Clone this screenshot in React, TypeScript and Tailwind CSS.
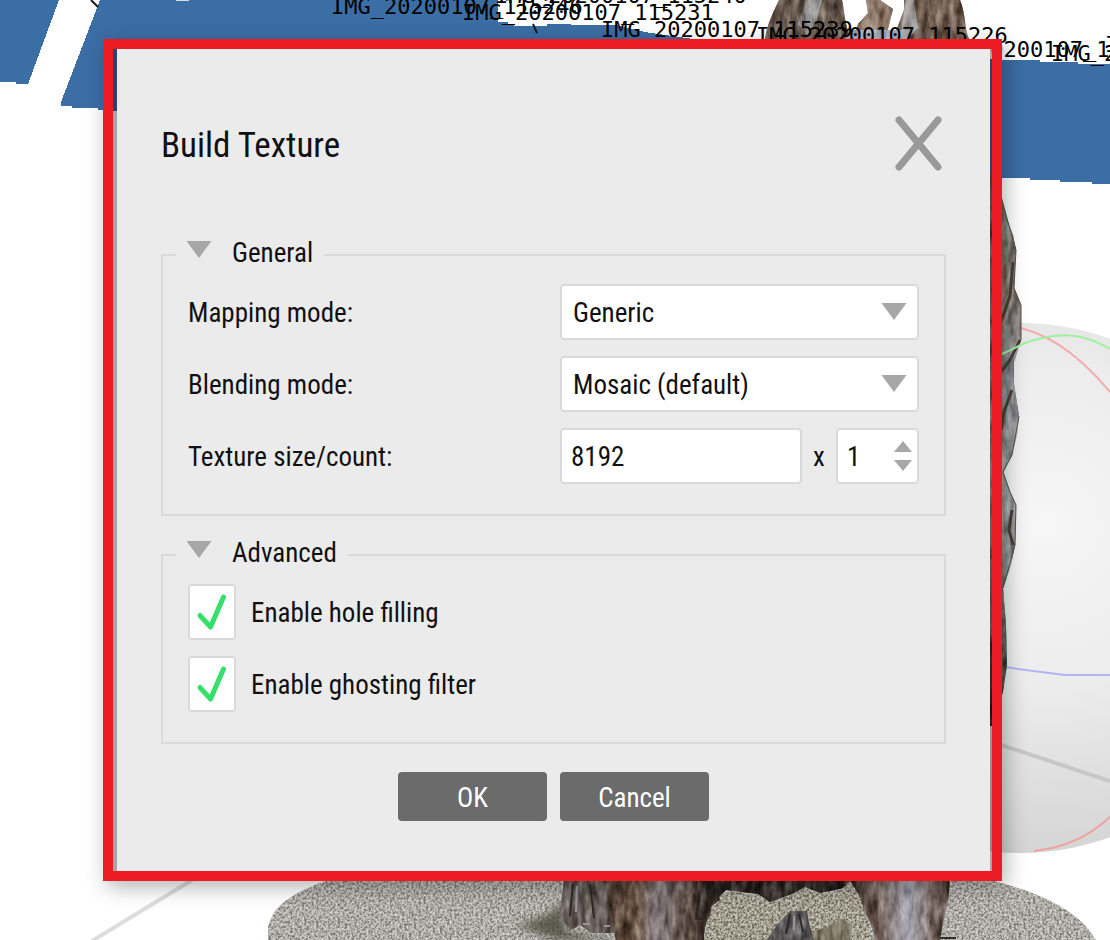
import { useState } from "react";
import type { ReactNode } from "react";

const cameraLabels = [
  { x: 331, y: 14, text: "IMG_20200107_115246" },
  { x: 495, y: 3, text: "IMG_20200107_115240" },
  { x: 462, y: 20, text: "IMG_20200107_115231" },
  { x: 601, y: 37, text: "IMG_20200107_115239" },
  { x: 756, y: 43, text: "IMG_20200107_115226" },
  { x: 924, y: 57, text: "IMG_20200107_11" },
  { x: 1051, y: 61, text: "IMG_20200107" },
  { x: 1105, y: 52, text: "IMG_20200107" },
];

function Scene() {
  return (
    <svg
      className="absolute inset-0 h-full w-full"
      viewBox="0 0 1110 940"
      preserveAspectRatio="xMidYMid slice"
      aria-hidden="true"
    >
      <defs>
        <filter id="stone" x="0" y="0" width="100%" height="100%" colorInterpolationFilters="sRGB">
          <feTurbulence type="fractalNoise" baseFrequency="0.42" numOctaves="3" seed="4" result="n" />
          <feColorMatrix
            in="n"
            type="matrix"
            values="2.2 0 0 0 -0.6  2.2 0 0 0 -0.6  2.2 0 0 0 -0.6  0 0 0 0 1"
            result="g"
          />
          <feComposite in="g" in2="SourceGraphic" operator="in" result="m" />
          <feBlend in="m" in2="SourceGraphic" mode="soft-light" />
        </filter>
        <filter id="bronze" x="0" y="0" width="100%" height="100%" colorInterpolationFilters="sRGB">
          <feTurbulence type="fractalNoise" baseFrequency="0.14 0.05" numOctaves="4" seed="9" result="n" />
          <feColorMatrix
            in="n"
            type="matrix"
            values="1.3 0 0 0 -0.13  1.3 0 0 0 -0.13  1.3 0 0 0 -0.13  0 0 0 0 1"
            result="g"
          />
          <feComposite in="g" in2="SourceGraphic" operator="in" result="m" />
          <feBlend in="m" in2="SourceGraphic" mode="soft-light" />
        </filter>
        <filter id="soft">
          <feGaussianBlur stdDeviation="4" />
        </filter>
        <radialGradient id="ball" cx="0.55" cy="0.38" r="0.62">
          <stop offset="0" stopColor="#f6f6f6" />
          <stop offset="0.5" stopColor="#ececec" />
          <stop offset="1" stopColor="#d5d5d5" />
        </radialGradient>
        <linearGradient id="legA">
          <stop offset="0" stopColor="#4a3a2e" />
          <stop offset="0.3" stopColor="#6b5546" />
          <stop offset="0.45" stopColor="#8a8082" />
          <stop offset="0.75" stopColor="#54443c" />
          <stop offset="1" stopColor="#2b211c" />
        </linearGradient>
        <linearGradient id="legB">
          <stop offset="0" stopColor="#33251e" />
          <stop offset="0.3" stopColor="#6a5850" />
          <stop offset="0.6" stopColor="#a9a8b3" />
          <stop offset="0.85" stopColor="#75655d" />
          <stop offset="1" stopColor="#3d2f28" />
        </linearGradient>
        <linearGradient id="torso" x1="0" y1="0" x2="0" y2="1">
          <stop offset="0" stopColor="#6b6b6c" />
          <stop offset="0.2" stopColor="#7d736a" />
          <stop offset="0.35" stopColor="#88878c" />
          <stop offset="0.62" stopColor="#9c9c9f" />
          <stop offset="0.75" stopColor="#77777a" />
          <stop offset="0.85" stopColor="#4c4a4a" />
          <stop offset="1" stopColor="#332e2c" />
        </linearGradient>
      </defs>

      <rect width="1110" height="940" fill="#ffffff" />

      <g fill="#3b6ea5" shapeRendering="crispEdges">
        <path d="M0 0H59L28 84H16V82H0Z" />
        <path d="M100 0H498V22H508V24H514V26H547V24H571V25H616L645 32L700 40L1002 60H1040V62H1078V64H1110V184H1092V182H1060V180H1030V178H1002L98 110V108H72V106H61V102Z" />
      </g>
      <path d="M176 0H189" stroke="#d5dde6" strokeWidth="2" />
      <path d="M91 0L98 7M533 24L537 33" stroke="#1b1b1b" strokeWidth="2" fill="none" />

      <g filter="url(#bronze)">
        <path d="M765 39C768 20 774 12 779 0H842C845 12 844 26 852 39Z" fill="#615347" />
        <path d="M853 39L858 24L868 13L866 0H880L893 9L888 29L880 39Z" fill="#907a6a" />
        <path d="M893 39L904 10V0H960C966 14 964 28 969 39Z" fill="#6d5b4d" />
        <path d="M806 0H822L816 22L808 36L798 24Z" fill="#8d8b8a" />
        <path d="M906 0H914L918 28L908 39H900Z" fill="#9b9896" />
        <path d="M850 30H910V39H845Z" fill="#a8adb9" />
      </g>

      <circle cx="1020" cy="588" r="265" fill="url(#ball)" />
      <g fill="none" strokeWidth="2">
        <path d="M1000 324C1042 329 1075 350 1110 392" stroke="#f5a9a9" />
        <path d="M1034 851C1064 848 1090 836 1110 817" stroke="#f0a0a0" />
        <path d="M1000 666L1018 669L1065 675H1110" stroke="#b4b4f3" />
        <path d="M992 742L1110 781" stroke="#c7c7c7" strokeWidth="4" />
        <path d="M192 880L92 941" stroke="#dddddd" strokeWidth="4" />
      </g>

      <path
        d="M988 168L995 180L1002 200L1008 222L1013 235L1016 250L1015 262L1014 288L1021 305V340L1014 362V384L1019 416L1017 435L1012 455L1003 472L1010 492L1016 505L1015 545L1011 565L1003 588L1006 625L1007 665L1003 691L994 726H988Z"
        fill="url(#torso)"
        filter="url(#bronze)"
      />
      <path
        d="M1001 196L1008 222L1016 250L1014 288L1021 305V340M1019 416L1012 455L1003 472L1010 492L1016 505L1015 545L1003 588"
        fill="none"
        stroke="#5a504a"
        strokeWidth="1"
      />
      <path
        d="M1013 262L1010 296L1001 322M1020 340L1010 360L1001 372M1012 390L1004 412L1001 430M1012 510L1009 530L1013 545"
        fill="none"
        stroke="#4b3f38"
        strokeWidth="3"
      />
      <path d="M1000 355L1025 343C1062 330 1084 334 1110 349" stroke="#9ff09f" strokeWidth="2" fill="none" />

      <path
        d="M268 941V928C272 904 298 889 340 877H975C1020 886 1078 905 1096 941Z"
        fill="#b0aea8"
        filter="url(#stone)"
      />
      <path d="M515 925C550 918 558 908 562 900L566 932L625 941H562Z" fill="#414230" opacity="0.75" filter="url(#soft)" />
      <g filter="url(#bronze)">
        <path d="M564 877H614V933H592L580 925L571 930L560 918Z" fill="#655b56" />
        <path d="M604 877H718L720 905C705 916 704 930 704 941H616Z" fill="url(#legA)" />
        <path d="M700 877H852L849 887L820 893L805 887L792 894L770 902L758 894L726 890L710 906L704 920H695Z" fill="#2f2722" />
        <path d="M846 877H950L949 893C948 905 942 923 940 941H875C874 921 858 902 849 891Z" fill="url(#legB)" />
      </g>
      <path
        d="M712 906L731 892L760 897L770 903L792 895L802 889L818 894L838 893L850 881L860 897L866 917L874 941H704Z"
        fill="#a39e8f"
        filter="url(#stone)"
      />
      <g filter="url(#bronze)">
        <path d="M766 941L777 925L790 911H807L809 924L815 941Z" fill="#555353" />
        <path d="M812 931L827 928L840 918L852 925V941H814Z" fill="#78705f" />
      </g>
      <path d="M573 884L570 916M590 884L594 918M790 914L786 934M799 914L803 932" stroke="#2e2926" strokeWidth="2" />
      <path d="M577 886L576 912M583 924H590M604 926H610M794 916V930" stroke="#98969a" strokeWidth="2" />
      <path d="M940 938H956" stroke="#333027" strokeWidth="2" />

      <g className="fill-black font-['DejaVu_Sans_Mono',monospace] text-[22px]">
        {cameraLabels.map((label) => (
          <text key={`${label.x}-${label.y}`} x={label.x} y={label.y}>
            {label.text}
          </text>
        ))}
      </g>
    </svg>
  );
}

function Triangle({ className = "" }: { className?: string }) {
  return (
    <svg className={`h-[17px] w-[26px] fill-[#a7a7a7] ${className}`} viewBox="0 0 26 17" aria-hidden="true">
      <path d="M0.5 0H25.5L13 17Z" />
    </svg>
  );
}

function Group({ title, children }: { title: string; children: ReactNode }) {
  const [open, setOpen] = useState(true);
  return (
    <fieldset className="min-w-0 border-2 border-[#dadada] px-[13px] pb-[30px]">
      <legend className="h-[34px] pr-[11px] pl-[10px]">
        <button
          type="button"
          aria-expanded={open}
          onClick={() => setOpen(!open)}
          className="flex h-[30px] items-center gap-5"
        >
          <Triangle className={open ? "mb-2" : "mb-2 -rotate-90"} />
          <span>{title}</span>
        </button>
      </legend>
      {open && <div className="flex flex-col gap-4 px-3 pt-3">{children}</div>}
    </fieldset>
  );
}

const fieldBox = "h-14 rounded-[4px] border-2 border-[#dadada] bg-white";

function SelectRow({ id, label, options }: { id: string; label: string; options: string[] }) {
  return (
    <div className="grid grid-cols-[minmax(0,1fr)_359px] items-center">
      <label htmlFor={id} className="pt-0.5">
        {label}
      </label>
      <div className="relative">
        <select id={id} className={`${fieldBox} w-full appearance-none pt-0.5 pr-12 pl-[11px]`}>
          {options.map((option) => (
            <option key={option}>{option}</option>
          ))}
        </select>
        <Triangle className="pointer-events-none absolute top-[19px] right-3" />
      </div>
    </div>
  );
}

function CheckRow({ id, label }: { id: string; label: string }) {
  return (
    <div className="flex items-center gap-[15px]">
      <span className="relative flex">
        <input id={id} type="checkbox" defaultChecked className={`${fieldBox} peer w-12 appearance-none`} />
        <svg
          className="pointer-events-none absolute inset-0 hidden h-14 w-12 peer-checked:block"
          viewBox="0 0 48 56"
          fill="none"
          stroke="#36df6c"
          strokeWidth="5"
          strokeLinecap="round"
          strokeLinejoin="round"
          aria-hidden="true"
        >
          <path d="M12 31.500L22.500 43L35.500 13" />
        </svg>
      </span>
      <label htmlFor={id} className="pt-0.5">
        {label}
      </label>
    </div>
  );
}

export default function App() {
  const [count, setCount] = useState(1);
  const buttonClass = "h-[49px] w-[149px] rounded-[4px] bg-[#6b6b6b] pt-0.5 text-white";
  return (
    <div className="relative min-h-screen overflow-hidden bg-white pt-[39px] pr-[108px] pb-[59px] pl-[103px]">
      <Scene />
      <div
        role="dialog"
        aria-labelledby="dialog-title"
        className="relative border-10 border-[#ed1c24] bg-black/35 pr-0.5 pl-1 font-['Roboto_Condensed','DejaVu_Sans_Condensed',sans-serif] text-[27px] leading-8 text-[#111111] shadow-[4px_6px_20px_rgba(0,0,0,0.3)]"
      >
        <form className="bg-[#ebebeb] px-11 pt-[67px] pb-[50px]" onSubmit={(event) => event.preventDefault()}>
          <header className="mb-[66px] flex h-14 items-center justify-between pr-[3px]">
            <h1 id="dialog-title" className="pt-1 text-[35px] leading-10">
              Build Texture
            </h1>
            <button type="button" aria-label="Close" className="h-14 w-12">
              <svg
                viewBox="0 0 48 56"
                fill="none"
                stroke="#999999"
                strokeWidth="7"
                strokeLinecap="round"
                aria-hidden="true"
              >
                <path d="M4 4L43 51M43 4L4 51" />
              </svg>
            </button>
          </header>

          <div className="flex flex-col gap-[22px]">
            <Group title="General">
              <SelectRow id="mapping" label="Mapping mode:" options={["Generic", "Orthophoto", "Spherical"]} />
              <SelectRow id="blending" label="Blending mode:" options={["Mosaic (default)", "Average", "Disabled"]} />
              <div className="grid grid-cols-[minmax(0,1fr)_359px] items-center">
                <label htmlFor="size" className="pt-0.5">
                  Texture size/count:
                </label>
                <div className="flex items-center">
                  <input id="size" type="text" defaultValue="8192" className={`${fieldBox} w-[242px] px-[9px] pt-0.5`} />
                  <label htmlFor="count" className="flex-1 pt-0.5 text-center">
                    x
                  </label>
                  <div className={`${fieldBox} flex w-[83px] items-center justify-between pr-1 pl-[9px]`}>
                    <input
                      id="count"
                      type="text"
                      inputMode="numeric"
                      value={count}
                      onChange={(event) => setCount(Number(event.target.value) || 1)}
                      className="w-8 pt-0.5"
                    />
                    <div className="flex flex-col gap-2">
                      <button type="button" aria-label="Increase" onClick={() => setCount(count + 1)}>
                        <svg className="h-[11px] w-5 fill-[#a7a7a7]" viewBox="0 0 20 11" aria-hidden="true">
                          <path d="M1 11L10 0L19 11Z" />
                        </svg>
                      </button>
                      <button type="button" aria-label="Decrease" onClick={() => setCount(Math.max(1, count - 1))}>
                        <svg className="h-[11px] w-5 fill-[#a7a7a7]" viewBox="0 0 20 11" aria-hidden="true">
                          <path d="M1 0L10 11L19 0Z" />
                        </svg>
                      </button>
                    </div>
                  </div>
                </div>
              </div>
            </Group>

            <Group title="Advanced">
              <CheckRow id="holes" label="Enable hole filling" />
              <CheckRow id="ghosting" label="Enable ghosting filter" />
            </Group>
          </div>

          <div className="mt-7 flex justify-center gap-[13px]">
            <button type="submit" className={buttonClass}>
              OK
            </button>
            <button type="button" className={buttonClass}>
              Cancel
            </button>
          </div>
        </form>
      </div>
    </div>
  );
}
